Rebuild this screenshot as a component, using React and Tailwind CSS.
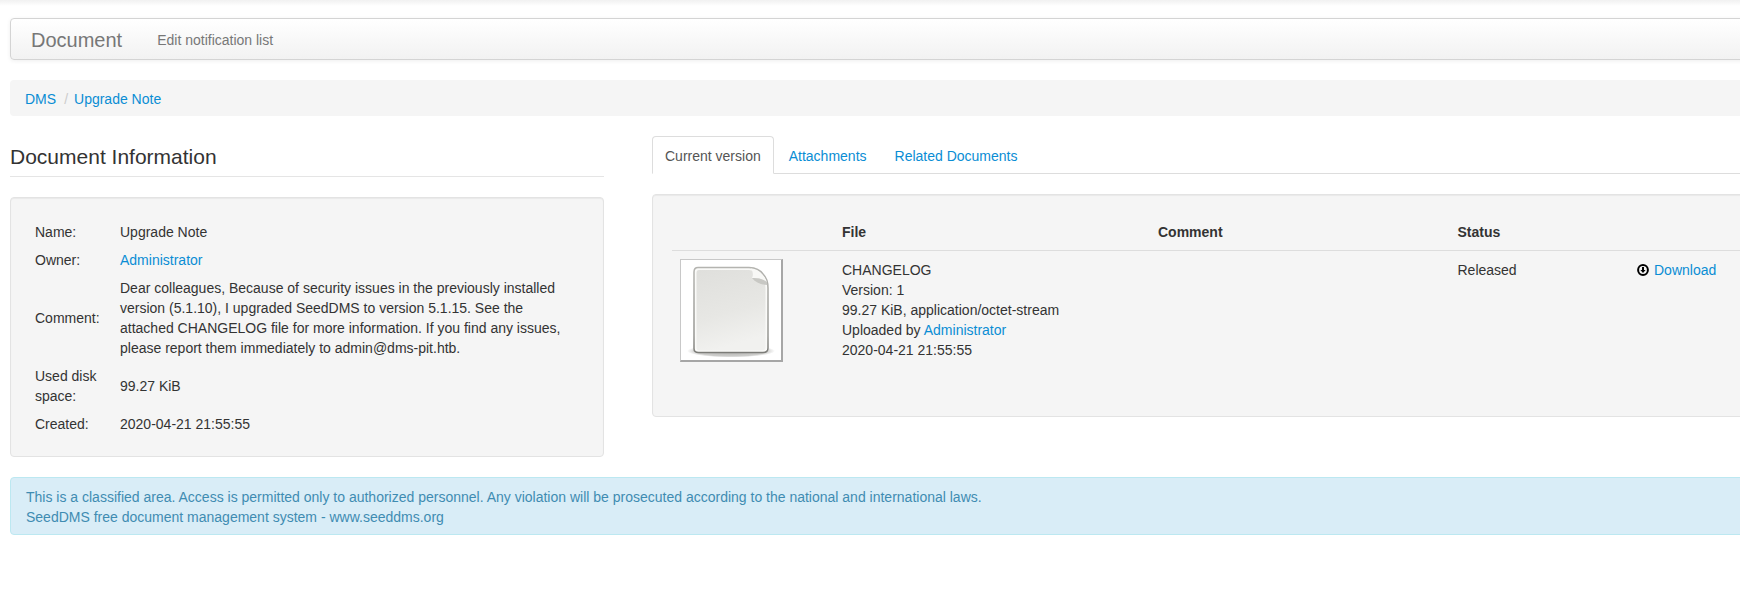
import React from "react";

const A = ({ children, className = "" }) => (
  <a href="#" className={`text-[#0a8dd4] ${className}`}>{children}</a>
);

function FileIcon() {
  return (
    <div className="w-[103px] h-[103px] bg-white border-t border-l border-t-[#c8c8c8] border-l-[#c8c8c8] border-r-2 border-b-2 border-r-[#a6a6a6] border-b-[#a6a6a6] shrink-0">
      <svg width="100" height="100" viewBox="0 0 100 100">
        <defs>
          <linearGradient id="page" x1="0" y1="0" x2="0.25" y2="1">
            <stop offset="0" stopColor="#dfdfdc" />
            <stop offset="0.6" stopColor="#e7e7e4" />
            <stop offset="1" stopColor="#f1f1ef" />
          </linearGradient>
          <linearGradient id="edge" x1="0" y1="0" x2="0" y2="1">
            <stop offset="0" stopColor="#b4b4b0" />
            <stop offset="0.8" stopColor="#969692" />
            <stop offset="1" stopColor="#7c7c78" />
          </linearGradient>
          <radialGradient id="shadow" cx="0.5" cy="0.5" r="0.5">
            <stop offset="0" stopColor="#8a8a86" stopOpacity="0.7" />
            <stop offset="0.8" stopColor="#9a9a96" stopOpacity="0.5" />
            <stop offset="1" stopColor="#9a9a96" stopOpacity="0" />
          </radialGradient>
        </defs>
        <ellipse cx="50" cy="91" rx="44" ry="6.5" fill="url(#shadow)" />
        <path d="M17 7.5H68Q78 8 82 14Q87 19 87 28V88Q87 92.5 82 92.5H17.5Q13 92.5 13 88.5V12Q13 7.5 17 7.5Z" fill="#fafaf8" stroke="url(#edge)" strokeWidth="1.5" />
        <path d="M18 10H68Q76 11 80 16Q84.5 21 84.5 29V87Q84.5 90.5 81 90.5H18Q15.5 90.5 15.5 87V13Q15.5 10 18 10Z" fill="url(#page)" />
        <path d="M70 8.5C72 12 72.5 15 71 18C77 17.5 82 19 86 22C83 14 77 10 70 8.5Z" fill="#f8f8f6" />
        <path d="M71 18C76 17.5 82 19 86 22L86.3 25C81 25 75 23 71 18Z" fill="#c8c8c4" />
      </svg>
    </div>
  );
}

function DownloadIcon() {
  return (
    <svg width="12" height="12" viewBox="0 0 12 12" className="shrink-0">
      <circle cx="6" cy="6" r="4.9" fill="none" stroke="#000000" strokeWidth="2" />
      <path d="M5 3H7V6H8.6L6 9L3.4 6H5Z" fill="#000000" />
    </svg>
  );
}

export default function App() {
  return (
    <div className="w-[1740px] h-[600px] overflow-hidden bg-white text-[14px] leading-[20px] text-[#333333] font-['Liberation_Sans',Arial,sans-serif]">
      <div className="h-[6px] bg-gradient-to-b from-[#f1f1f1] to-white" />
      <div className="w-[1860px] pl-[10px] pt-[12px]">
        <div className="h-[42px] flex items-center pt-[2px] rounded-[4px] border border-[#d4d4d4] bg-gradient-to-b from-white to-[#f2f2f2] shadow-[0_1px_4px_rgba(0,0,0,0.065)] text-[#777777]">
          <span className="ml-[20px] text-[20px] leading-[20px]">Document</span>
          <span className="ml-[35px]">Edit notification list</span>
        </div>
        <div className="mt-[20px] h-[36px] flex items-center pt-[2px] rounded-[4px] bg-[#f5f5f5] px-[15px]">
          <A>DMS</A>
          <span className="pl-[8px] pr-[6px] text-[#cccccc]">/</span>
          <A>Upgrade Note</A>
        </div>
        <div className="mt-[20px] flex gap-[48px] items-start">
          <div className="w-[594px] shrink-0">
            <div className="h-[41px] pt-[1px] border-b border-[#e5e5e5] text-[21px] leading-[40px]">Document Information</div>
            <div className="mt-[20px] h-[260px] rounded-[4px] border border-[#e3e3e3] bg-[#f5f5f5] p-[19px] pt-[20px] shadow-[inset_0_1px_1px_rgba(0,0,0,0.05)]">
              <table className="w-full border-collapse">
                <tbody>
                  {[
                    ["Name:", "Upgrade Note"],
                    ["Owner:", <A>Administrator</A>],
                    ["Comment:", "Dear colleagues, Because of security issues in the previously installed version (5.1.10), I upgraded SeedDMS to version 5.1.15. See the attached CHANGELOG file for more information. If you find any issues, please report them immediately to admin@dms-pit.htb."],
                    ["Used disk space:", "99.27 KiB"],
                    ["Created:", "2020-04-21 21:55:55"],
                  ].map(([k, v], i) => (
                    <tr key={i}>
                      <td className="w-[86px] py-[4px] pl-[5px] pr-[3px] align-middle">{k}</td>
                      <td className="p-[4px] align-middle">{v}</td>
                    </tr>
                  ))}
                </tbody>
              </table>
            </div>
          </div>
          <div className="flex-1 min-w-0">
            <div className="h-[38px] flex border-b border-[#dddddd]">
              <div className="h-[38px] px-[12px] pt-[9px] rounded-t-[4px] border border-[#dddddd] border-b-white bg-white text-[#555555]">Current version</div>
              <A className="ml-[2px] px-[13px] pt-[10px] leading-[20px]">Attachments</A>
              <A className="ml-[2px] px-[13px] pt-[10px] leading-[20px]">Related Documents</A>
            </div>
            <div className="mt-[20px] h-[223px] rounded-[4px] border border-[#e3e3e3] bg-[#f5f5f5] p-[19px] shadow-[inset_0_1px_1px_rgba(0,0,0,0.05)]">
              <div className="grid grid-cols-[162px_316px_299.5px_179.5px_1fr] border-b border-[#dddddd] h-[37px] font-bold">
                <div />
                <div className="p-[8px]">File</div>
                <div className="p-[8px]">Comment</div>
                <div className="p-[8px]">Status</div>
                <div />
              </div>
              <div className="grid grid-cols-[162px_316px_299.5px_179.5px_1fr]">
                <div className="p-[8px]"><FileIcon /></div>
                <div className="px-[8px] pt-[9px]">
                  <div>CHANGELOG</div>
                  <div>Version: 1</div>
                  <div>99.27 KiB, application/octet-stream</div>
                  <div>Uploaded by <A>Administrator</A></div>
                  <div>2020-04-21 21:55:55</div>
                </div>
                <div className="px-[8px] pt-[9px]" />
                <div className="px-[8px] pt-[9px]">Released</div>
                <div className="px-[8px] pt-[9px]">
                  <div className="flex items-center gap-[5px]">
                    <DownloadIcon />
                    <A>Download</A>
                  </div>
                </div>
              </div>
            </div>
          </div>
        </div>
        <div className="mt-[20px] h-[58px] rounded-[4px] border border-[#bce8f1] bg-[#d9edf7] pl-[15px] pt-[9px] text-[#3f8cb2]">
          <div>This is a classified area. Access is permitted only to authorized personnel. Any violation will be prosecuted according to the national and international laws.</div>
          <div>SeedDMS free document management system - www.seeddms.org</div>
        </div>
      </div>
    </div>
  );
}
